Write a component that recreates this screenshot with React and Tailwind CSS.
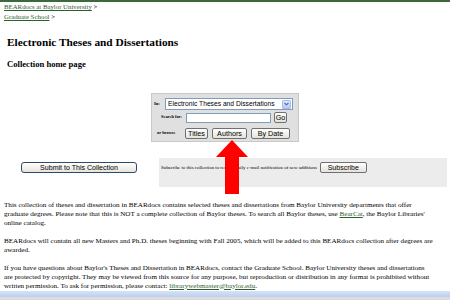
const serif = { fontFamily: '"Liberation Serif", "Times New Roman", serif' };

function XpButton({ children, className = '' }) {
    return (
        <div
            className={`flex items-center justify-center rounded-[2px] border border-[#707070] bg-gradient-to-b from-white to-[#e4e2da] text-[7.2px] leading-none text-black font-['Liberation_Sans',Arial,sans-serif] ${className}`}
        >
            {children}
        </div>
    );
}

function GreenLink({ children }) {
    return <span className="text-[#2d5e2d] underline decoration-[0.5px] underline-offset-[1px]">{children}</span>;
}

export default function App() {
    return (
        <div className="relative w-[450px] h-[300px] overflow-hidden bg-white flex flex-col text-black" style={serif}>
            <div className="h-[2px] bg-[#3b6b3b] shrink-0" />

            <div className="flex-1 overflow-hidden">
                {/* Breadcrumb */}
                <div className="px-[4px] text-[6.8px] leading-[10px]">
                    <div><GreenLink>BEARdocs at Baylor University</GreenLink> &gt;</div>
                    <div><GreenLink>Graduate School</GreenLink> &gt;</div>
                </div>

                <h1 className="mt-[13px] px-[7px] text-[11.3px] leading-[14px] font-bold">Electronic Theses and Dissertations</h1>
                <h2 className="mt-[9.5px] px-[7px] text-[8.6px] leading-[11px] font-bold">Collection home page</h2>

                {/* Search box */}
                <div className="mt-[23.5px] flex justify-center">
                    <div className="w-[148px] h-[49px] bg-[#e0e0e0] border border-[#c8c8c8] pt-[4px]">
                        <div className="flex items-center h-[12px]">
                            <span className="ml-[2px] w-[11px] text-[4.6px] font-bold">In:</span>
                            <div className="w-[128px] h-[12px] bg-white border border-[#7f9db9] flex items-center justify-between pl-[2px] pr-[1px]">
                                <span className="text-[6.7px] leading-none font-['Liberation_Sans',Arial,sans-serif] whitespace-nowrap">Electronic Theses and Dissertations</span>
                                <div className="w-[9px] h-[9px] rounded-[1px] bg-gradient-to-b from-[#dfe9fd] to-[#b4c9f5] border border-[#a6bdf0] flex items-center justify-center">
                                    <svg width="5" height="4" viewBox="0 0 5 4"><path d="M0.5 0.8 L2.5 2.8 L4.5 0.8" fill="none" stroke="#4d6185" strokeWidth="1.1" /></svg>
                                </div>
                            </div>
                        </div>
                        <div className="flex items-center h-[11px] mt-[2px]">
                            <span className="ml-[9px] w-[25px] text-[4.4px] font-bold whitespace-nowrap">Search for:</span>
                            <div className="w-[85px] h-[10px] bg-white border border-[#7f9db9]" />
                            <XpButton className="ml-[3px] w-[13px] h-[11px]">Go</XpButton>
                        </div>
                        <div className="flex items-center h-[11px] mt-[5px]">
                            <span className="ml-[5px] w-[28px] text-[4.4px] font-bold whitespace-nowrap">or browse</span>
                            <XpButton className="w-[23px] h-[11px]">Titles</XpButton>
                            <XpButton className="ml-[4px] w-[35px] h-[11px]">Authors</XpButton>
                            <XpButton className="ml-[4px] w-[39px] h-[11px]">By Date</XpButton>
                        </div>
                    </div>
                </div>

                {/* Submit / subscribe row */}
                <div className="mt-[16px] flex items-start">
                    <div className="ml-[21px] mt-[4px] w-[116px] h-[11px] rounded-[3px] border border-[#2f4a66] bg-gradient-to-b from-white to-[#e6e4dc] flex items-center justify-center text-[7.05px] leading-none font-['Liberation_Sans',Arial,sans-serif]">
                        Submit to This Collection
                    </div>
                    <div className="ml-[22px] w-[288px] h-[29px] bg-[#ececec] flex items-start pt-[4px] pl-[2px]">
                        <span className="text-[4.9px] leading-[11px] whitespace-nowrap">Subscribe to this collection to receive daily e-mail notification of new additions</span>
                        <XpButton className="ml-[3px] w-[47px] h-[11px] text-[7px]">Subscribe</XpButton>
                    </div>
                </div>

                {/* Description */}
                <div className="px-[4px] text-[7.1px] leading-[9px] whitespace-nowrap">
                    <p className="mt-[13.5px]">
                        This collection of theses and dissertation in BEARdocs contains selected theses and dissertations from Baylor University departments that offer<br />
                        graduate degrees. Please note that this is NOT a complete collection of Baylor theses. To search all Baylor theses, use <GreenLink>BearCat</GreenLink>, the Baylor Libraries'<br />
                        online catalog.
                    </p>
                    <p className="mt-[9px]">
                        BEARdocs will contain all new Masters and Ph.D. theses beginning with Fall 2005, which will be added to this BEARdocs collection after degrees are<br />
                        awarded.
                    </p>
                    <p className="mt-[9px]">
                        If you have questions about Baylor's Theses and Dissertation in BEARdocs, contact the Graduate School. Baylor University theses and dissertations<br />
                        are protected by copyright. They may be viewed from this source for any purpose, but reproduction or distribution in any format is prohibited without<br />
                        written permission. To ask for permission, please contact: <GreenLink>librarywebmaster@baylor.edu</GreenLink>.
                    </p>
                </div>
            </div>

            {/* Browser status strip */}
            <div className="shrink-0 h-[6px] bg-gradient-to-b from-[#d6e3f6] to-[#bccff0]" />
            <div className="shrink-0 h-[3px] bg-[#dcdcdc]" />

            {/* Red arrow pointing at Authors */}
            <svg className="absolute left-[215px] top-[140px]" width="34" height="55" viewBox="0 0 34 55">
                <polygon points="17,0 33,17 24,17 24,54 10,54 10,17 1,17" fill="#ff0000" />
            </svg>
        </div>
    );
}
